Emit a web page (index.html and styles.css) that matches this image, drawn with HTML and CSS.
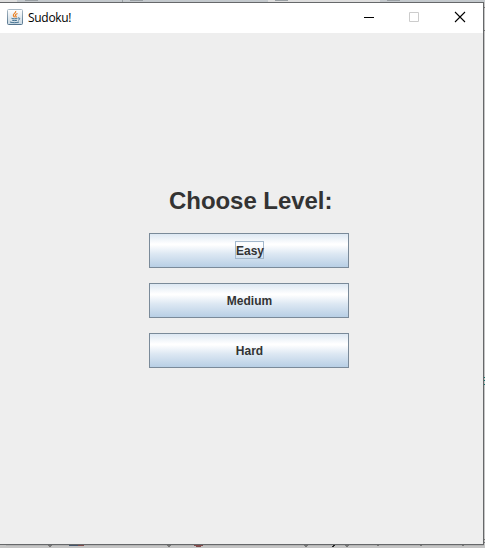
FILE: index.html
```html
<!DOCTYPE html>
<html lang="en">
<head>
<meta charset="utf-8">
<title>Sudoku!</title>
<link rel="stylesheet" href="styles.css">
</head>
<body>
<div class="desktop">
  <svg class="backdrop" width="485" height="548" viewBox="0 0 485 548" shape-rendering="crispEdges" aria-hidden="true">
    <path fill="#c4c9cd" d="M0 0h485v2H0z"/>
    <path fill="#dedede" d="M0 0h17v2H0zM268 0h112v2H268z"/>
    <path fill="#999fa3" d="M25 0h13v1H25zM130 0h13v1h-13zM275 0h13v1h-13zM387 0h13v1h-13zM122 0h1v2h-1z"/>
    <path fill="#c5c5c5" d="M484 2h1v546h-1zM0 545h485v3H0z"/>
    <path fill="#b5b5b5" d="M6 545h478v1H6z"/>
    <path fill="#777" d="M484 7h1v1h-1zM484 30h1v1h-1zM484 539h1v1h-1zM484 542h1v1h-1zM48 545h4v1h-4zM49 546h2v1h-2zM167 545h4v1h-4zM168 546h2v1h-2zM304 545h4v1h-4zM305 546h2v1h-2zM345 545h4v1h-4zM346 546h2v1h-2zM377 545h2v1h-2zM420 545h2v1h-2zM462 545h2v1h-2z"/>
    <path fill="#45566b" d="M69 545h9v1h-9z"/>
    <path fill="#804b4b" d="M78 545h6v1h-6zM194 545h9v1h-9zM196 546h5v1h-5z"/>
    <path fill="#222" d="M333 545h2v1h-2zM332 546h2v1h-2z"/>
    <path fill="#16756c" d="M484 377h1v1h-1zM484 380h1v1h-1zM484 384h1v1h-1z"/>
  </svg>
  <div class="window">
    <header class="titlebar">
      <svg class="app-icon" width="16" height="16" viewBox="0 0 16 16" aria-hidden="true">
        <defs>
          <linearGradient id="tile" x2="0" y2="1"><stop stop-color="#fff"/><stop offset="1" stop-color="#c9d8e2"/></linearGradient>
          <linearGradient id="edge" x2="0" y2="1"><stop stop-color="#a9b9c5"/><stop offset="1" stop-color="#54748d"/></linearGradient>
        </defs>
        <rect x=".5" y=".5" width="15" height="15" rx="1" fill="url(#tile)" stroke="url(#edge)"/>
        <path d="M8.700 2c.6 2-3 2.700-2.300 4.500.2.800 1 1.300 1.300 1.800M10.500 4.500c-2 .8-2.700 1.700-1.600 2.700.5.500.2 1-.2 1.300" fill="none" stroke="#ea8124" stroke-width="1.200"/>
        <path d="M4.500 9.300c1.500.7 4.700.6 6 0M5.200 11.300c1.500.4 3.500.4 4.800 0M3 13c2.500.9 6.500.9 9 0M11 9c2.300-.6 2.200 1.600.2 2.200" fill="none" stroke="#42708f" stroke-width="1"/>
      </svg>
      <span class="title">Sudoku!</span>
      <div class="controls">
        <svg width="12" height="12" viewBox="0 0 12 12" aria-hidden="true"><path d="M2 6.500h10" stroke="#000"/></svg>
        <svg width="12" height="12" viewBox="0 0 12 12" aria-hidden="true"><path d="M1.500 1.500h9v9h-9z" fill="none" stroke="#ccc"/></svg>
        <svg width="12" height="12" viewBox="0 0 12 12" aria-hidden="true"><path d="M1 1l10 10M11 1L1 11" stroke="#000" stroke-width="1.100"/></svg>
      </div>
    </header>
    <main class="content">
      <h1 class="heading">Choose Level:</h1>
      <div class="levels">
        <button class="level"><span class="label focused">Easy</span></button>
        <button class="level"><span class="label">Medium</span></button>
        <button class="level"><span class="label">Hard</span></button>
      </div>
    </main>
  </div>
</div>
</body>
</html>
```
FILE: styles.css
```css
* {
  box-sizing: border-box;
}

body {
  margin: 0;
  overflow: hidden;
}

.desktop {
  position: relative;
  width: 485px;
  height: 548px;
  padding-top: 2px;
}

.backdrop {
  position: absolute;
  top: 0;
  left: 0;
}

.window {
  position: relative;
  display: flex;
  flex-direction: column;
  width: 484px;
  height: 543px;
  border: solid #66686a;
  border-width: 1px 1px 1px 0;
  background: #eee;
}

.titlebar {
  display: flex;
  align-items: center;
  height: 30px;
  padding: 0 17px 0 7px;
  background: #fff;
}

.app-icon {
  margin-top: -2px;
}

.title {
  margin: -1px 0 0 5px;
  font: 12px/16px "Open Sans", "Noto Sans", sans-serif;
  letter-spacing: -0.3px;
  color: #000;
}

.controls {
  display: flex;
  gap: 34px;
  margin: -2px 0 0 auto;
}

.controls svg {
  display: block;
}

.content {
  flex: 1;
  display: flex;
  flex-direction: column;
  padding: 154px 0 0 149px;
  font-family: "Liberation Sans", Arial, sans-serif;
  color: #333;
}

.heading {
  margin: 0 0 18px 20px;
  font-size: 24px;
  line-height: 28px;
  font-weight: bold;
  letter-spacing: -0.05px;
  white-space: nowrap;
}

.levels {
  display: flex;
  flex-direction: column;
  gap: 15px;
  width: 200px;
}

.level {
  display: flex;
  align-items: center;
  justify-content: center;
  height: 35px;
  padding: 0 0 0 1px;
  border: 1px solid #7a8a99;
  background: linear-gradient(#dde8f3 0, #fff 30%, #fff 33%, #dde8f3 60%, #b8cfe5 100%);
  font: bold 12px/16px "Liberation Sans", Arial, sans-serif;
  color: #333;
}

.label {
  height: 18px;
  margin-top: -1px;
  padding-top: 2px;
  line-height: 15px;
  white-space: nowrap;
  border: 1px solid transparent;
}

.focused {
  width: 29px;
  border-color: #a3b8cc;
}
```
